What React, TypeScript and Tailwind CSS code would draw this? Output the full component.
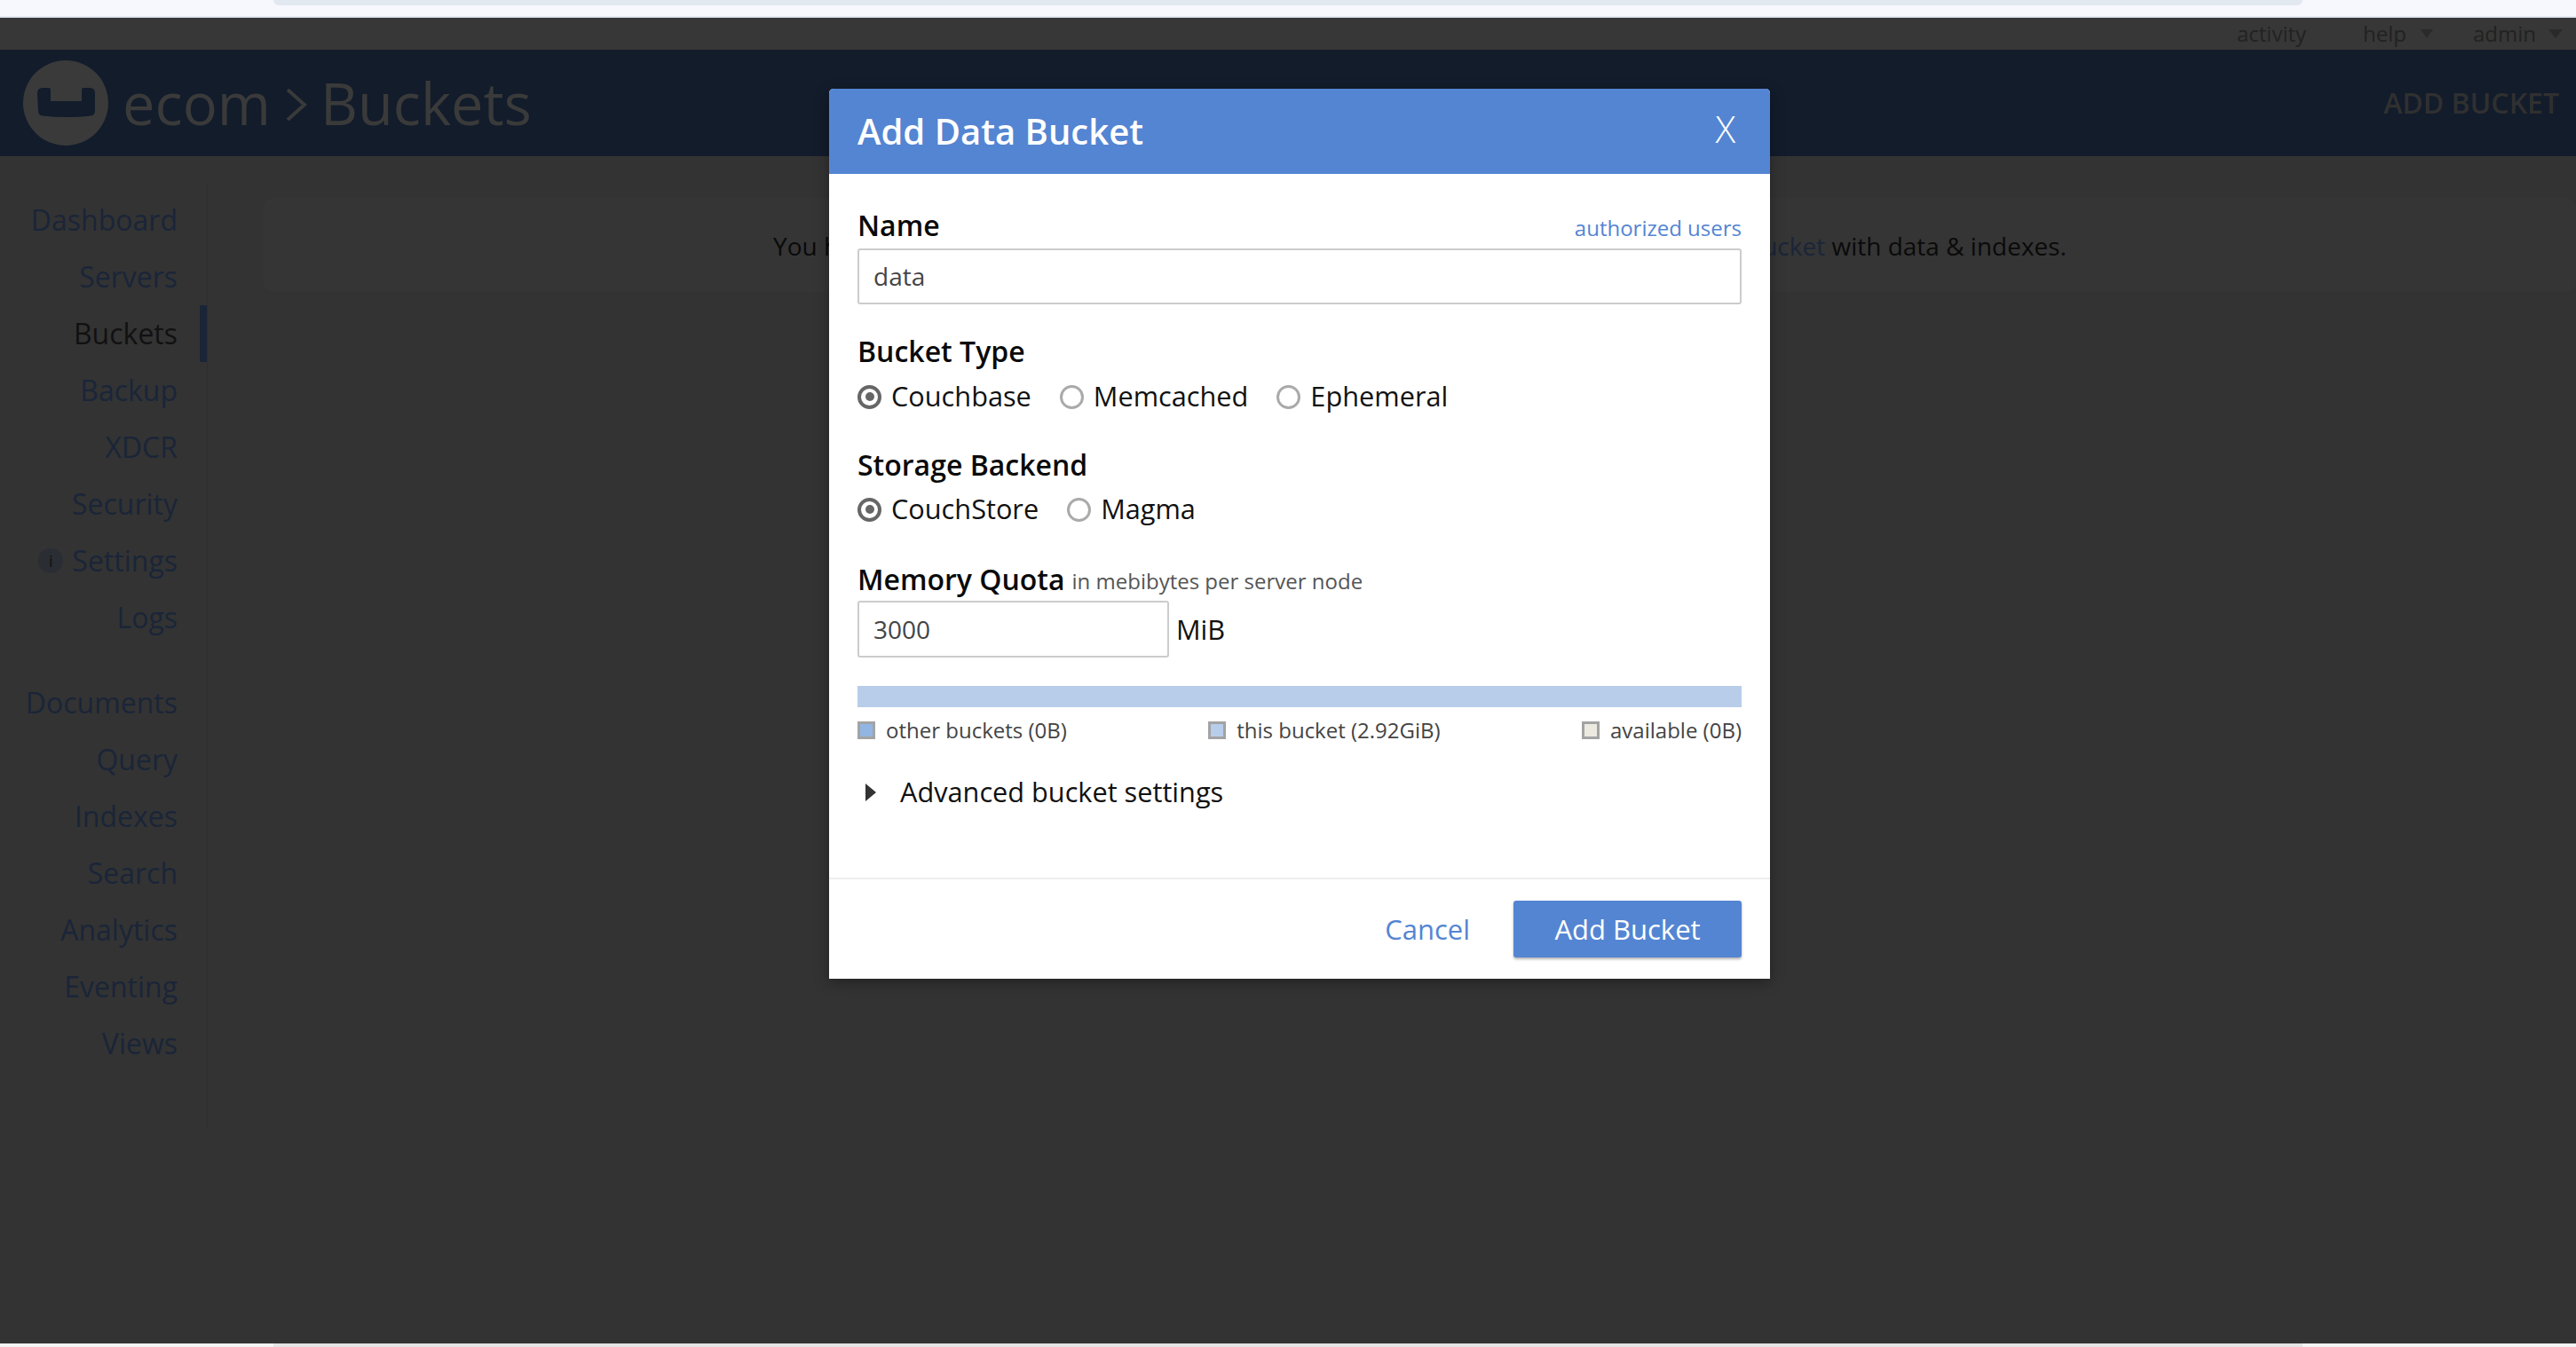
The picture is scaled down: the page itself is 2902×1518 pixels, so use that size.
import { Fragment } from 'react';

const NAV_GROUPS = [
  ['Dashboard', 'Servers', 'Buckets', 'Backup', 'XDCR', 'Security', 'Settings', 'Logs'],
  ['Documents', 'Query', 'Indexes', 'Search', 'Analytics', 'Eventing', 'Views'],
];

function Logo() {
  return (
    <svg width="96" height="96" viewBox="0 0 96 96" className="shrink-0">
      <circle cx="48" cy="48" r="48" fill="#3a3a3a" />
      <path
        d="M16 37q0-6 6-6h7q2 0 2 2v13h35V33q0-2 2-2h7q6 0 6 6v20q0 5-5 5.5q-13 1.5-27 1.5t-27-1.5q-5-.5-5-5.5z"
        fill="#121c2b"
      />
    </svg>
  );
}

function Radio({ label, checked, className = '' }: { label: string; checked?: boolean; className?: string }) {
  return (
    <div className={`flex items-center gap-[11px] ${className}`}>
      <span
        className={`flex h-[27px] w-[27px] items-center justify-center rounded-full ${
          checked ? 'border-4 border-[#666]' : 'border-[3px] border-[#aaa]'
        }`}
      >
        {checked && <span className="h-[10px] w-[10px] rounded-full bg-[#666]" />}
      </span>
      <span className="-mt-[2px] text-[30.7px] text-[#111]">{label}</span>
    </div>
  );
}

function LegendItem({ label, color }: { label: string; color: string }) {
  return (
    <div className="flex h-5 items-center gap-3 text-[24px] leading-5 text-[#444]">
      <span className={`h-5 w-5 border-[3px] border-[#a3a3a3] ${color}`} />
      {label}
    </div>
  );
}

function Label({ children }: { children: React.ReactNode }) {
  return <div className="flex h-11 items-center text-[32px] font-semibold text-[#0a0a0a]">{children}</div>;
}

function AddBucketDialog() {
  return (
    <div className="absolute left-[934px] top-[100px] w-[1060px] rounded-t-[5px] bg-white shadow-[0_4px_16px_rgba(0,0,0,0.35)]">
      <div className="flex h-24 items-center justify-between rounded-t-[5px] bg-[#5485d2] pl-8 pr-[39px]">
        <div className="text-[40px] font-semibold leading-none text-white">Add Data Bucket</div>
        <div className="-mt-[6px] text-[42px] font-light leading-none text-white">X</div>
      </div>

      <div className="px-8 pt-9">
        <div className="mb-1 flex items-center justify-between">
          <Label>Name</Label>
          <a className="pt-[6px] text-[24px] text-[#5485d2]">authorized users</a>
        </div>
        <div className="flex h-[63px] items-center rounded-[3px] border-2 border-[#ccc] pb-[2px] pl-4 text-[28px] text-[#444]">data</div>

        <div className="mt-[31px]">
          <Label>Bucket Type</Label>
        </div>
        <div className="mt-[10px] flex h-[38px] items-center">
          <Radio label="Couchbase" checked />
          <Radio label="Memcached" className="ml-8" />
          <Radio label="Ephemeral" className="ml-8" />
        </div>

        <div className="mt-9">
          <Label>Storage Backend</Label>
        </div>
        <div className="mt-[9px] flex h-[38px] items-center">
          <Radio label="CouchStore" checked />
          <Radio label="Magma" className="ml-8" />
        </div>

        <div className="mt-[38px] flex items-center gap-2">
          <Label>Memory Quota</Label>
          <span className="pt-1 text-[24px] text-[#555]">in mebibytes per server node</span>
        </div>
        <div className="mt-[2px] flex items-center gap-2">
          <div className="flex h-16 w-[351px] items-center rounded-[3px] border-2 border-[#ccc] pl-4 text-[28px] text-[#444]">3000</div>
          <span className="text-[30.7px] text-[#111]">MiB</span>
        </div>

        <div className="mt-8 h-6 bg-[#b8cdea]" />
        <div className="mt-4 flex justify-between">
          <LegendItem label="other buckets (0B)" color="bg-[#92b6e3]" />
          <LegendItem label="this bucket (2.92GiB)" color="bg-[#b8cdea]" />
          <LegendItem label="available (0B)" color="bg-[#ece9e0]" />
        </div>

        <div className="mt-10 flex h-10 items-center pl-[9px]">
          <svg width="12" height="20" viewBox="0 0 12 20">
            <path d="M0 0l12 10L0 20z" fill="#333" />
          </svg>
          <span className="-mt-[2px] ml-[27px] text-[30.7px] text-[#111]">Advanced bucket settings</span>
        </div>
      </div>

      <div className="mt-[76px] flex items-center justify-end gap-[49px] border-t-2 border-[#eee] px-8 py-6">
        <a className="text-[31px] text-[#5485d2]">Cancel</a>
        <button className="h-16 w-[257px] rounded-[3px] bg-[#5485d2] text-[31px] text-white shadow-[0_2px_3px_rgba(0,0,0,0.3)]">Add Bucket</button>
      </div>
    </div>
  );
}

export default function App() {
  return (
    <div className="relative flex h-[1518px] w-[2902px] flex-col overflow-hidden bg-white font-['Open_Sans',sans-serif]">
      {/* browser chrome sliver */}
      <div className="flex h-5 shrink-0 justify-center border-b-2 border-[#e2e8f0] bg-[#f7f8fe]">
        <div className="h-[6px] w-[2286px] rounded-b-[10px] bg-[#e2e8f0]" />
      </div>

      <div className="flex min-h-0 flex-1 flex-col bg-[#333333]">
        <div className="relative h-9 shrink-0 bg-[#373737] text-[24px] leading-none text-[#222]">
          <div className="flex h-full items-center justify-end pr-[15px]">
            <span>activity</span>
            <span className="ml-16 flex items-center gap-4">
              help
              <svg width="14" height="10" viewBox="0 0 14 10"><path d="M0 0h14L7 10z" fill="#2a2a2a" /></svg>
            </span>
            <span className="ml-[45px] flex items-center gap-[14px]">
              admin
              <svg width="16" height="10" viewBox="0 0 16 10"><path d="M0 0h16L8 10z" fill="#2a2a2a" /></svg>
            </span>
          </div>
        </div>

        <header className="flex h-[120px] shrink-0 items-center justify-between bg-[#121c2b] pl-[26px] pr-[19px]">
          <div className="flex items-center text-[65px] leading-none text-[#3a3a3a]">
            <Logo />
            <span className="ml-4">ecom</span>
            <svg width="24" height="36" viewBox="0 0 24 36" className="ml-[17px] mt-1">
              <path d="M2 1l19 17L2 35" fill="none" stroke="#3a3a3a" strokeWidth="4" />
            </svg>
            <span className="ml-[15px]">Buckets</span>
          </div>
          <div className="text-[32px] font-semibold text-[#303030]">ADD BUCKET</div>
        </header>

        <div className="flex min-h-0 flex-1 items-start">
          <nav className="mt-8 flex h-[1062px] w-[234px] shrink-0 flex-col border-r border-[#2e2e2e] pt-2 text-right text-[32px]">
            {NAV_GROUPS.map((group, i) => (
              <Fragment key={i}>
                {group.map((item) => (
                  <div
                    key={item}
                    className={`flex h-16 shrink-0 items-center justify-end gap-[10px] border-r-8 pr-[25px] ${
                      item === 'Buckets' ? 'border-[#1a2538] text-[#111]' : 'border-transparent text-[#1a2538]'
                    } ${i === 1 && item === 'Documents' ? 'mt-8' : ''}`}
                  >
                    {item === 'Settings' && (
                      <span className="flex h-7 w-7 items-center justify-center rounded-full bg-[#2a2d33] text-[18px] text-[#111]">i</span>
                    )}
                    {item}
                  </div>
                ))}
              </Fragment>
            ))}
          </nav>

          <main className="ml-[63px] mt-[47px] flex h-[106px] flex-1 items-center justify-center rounded-[10px] bg-[#353535] pt-[2px] text-[28px] text-[#0a0a0a]">
            <div>
              You have no data buckets. Use <span className="mx-[6px] font-semibold">ADD BUCKET</span> above to create one, or load a{' '}
              <a className="text-[#1a2538]">sample bucket</a> with data &amp; indexes.
            </div>
          </main>
        </div>
      </div>

      <div className="flex h-1 shrink-0 justify-center bg-[#f3f3f3]">
        <div className="h-full w-[2286px] bg-[#e4e4e4]" />
      </div>

      <AddBucketDialog />
    </div>
  );
}
